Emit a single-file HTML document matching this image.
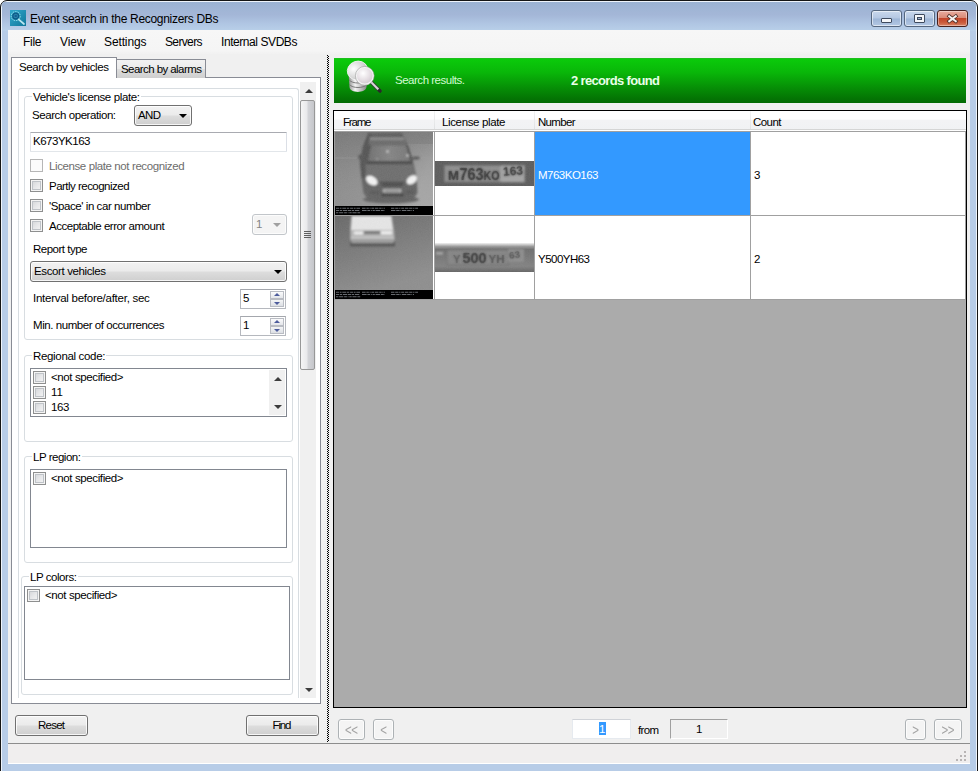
<!DOCTYPE html>
<html lang="en">
<head>
<meta charset="utf-8">
<title>Event search in the Recognizers DBs</title>
<style>
*{box-sizing:border-box;margin:0;padding:0}
html,body{width:978px;height:771px;overflow:hidden;background:#b9d1ea}
body{position:relative;font-family:"Liberation Sans",sans-serif;font-size:11.5px;color:#000}
.a{position:absolute}
.t{position:absolute;white-space:nowrap;line-height:14px;height:14px}
#frame{left:0;top:0;width:978px;height:771px;background:#fff;overflow:hidden}
#page{left:0;top:0;width:978px;height:771px;background:#fff}
#win{left:0;top:0;width:978px;height:790px;background:#b7cce7;border:1px solid #141414;border-radius:7px 7px 0 0;box-shadow:inset 0 0 0 1px #eef3fa;overflow:hidden}
#titlegrad{left:1px;top:1px;width:974px;height:29px;background:linear-gradient(#9bb2d2 0,#a4b7d8 45%,#b0c6e3 75%,#b9d0e9 100%)}
#client{left:8px;top:30px;width:962px;height:734px;background:#f0f0f0}
#menubar{left:8px;top:30px;width:962px;height:24px;background:linear-gradient(#f7f7f7,#f5f5f5 85%,#f1f1f1)}
.cb{border:1px solid #55677f;border-radius:3px;background:linear-gradient(#c9d8ec 0,#b4c7e2 48%,#9db5d6 52%,#b3c8e4 100%);box-shadow:inset 0 0 0 1px rgba(255,255,255,.55)}
.cb.x{background:linear-gradient(#e9ac9f 0,#d98a76 46%,#c3452a 50%,#c9593a 75%,#d98465 100%);border-color:#47201c;box-shadow:inset 0 0 0 1px rgba(255,255,255,.4)}
.gb{border:1px solid #d8dde1;border-radius:3px}
.gbl{background:#fff}
.chk{width:13px;height:13px;border:1px solid #8e8f8f;background:linear-gradient(135deg,#cfd1d4 0,#e6e7e9 50%,#f7f7f7 100%);box-shadow:inset 0 0 0 1px #f4f4f4, inset 0 0 0 2px #bfc3c8}
.chk.dis{border-color:#b6b6b6;box-shadow:none;background:#fbfbfb}
.btn{border:1px solid #707070;border-radius:3px;background:linear-gradient(#f2f2f2 0,#ebebeb 48%,#dddddd 52%,#cfcfcf 100%);box-shadow:inset 0 0 0 1px rgba(255,255,255,.8)}
.btn.dis{border-color:#adb2b5;background:#f4f4f4;box-shadow:inset 0 0 0 1px #fcfcfc}
.lb{border:1px solid #828790;background:#fff}
.edit{border:1px solid #e2e6ea;border-top-color:#a9abb1;border-left-color:#dfe1e7;border-right-color:#dbdfe6;background:#fff;border-radius:1px}
</style>
</head>
<body>
<div id="frame" class="a">
<div id="page" class="a"></div><div id="win" class="a"><div id="titlegrad" class="a"></div></div>
<svg class="a" style="left:10px;top:10px" width="16" height="16" viewBox="0 0 16 16">
<defs><linearGradient id="ig" x1="0" y1="0" x2="1" y2="1"><stop offset="0" stop-color="#31a9cc"/><stop offset="1" stop-color="#10779b"/></linearGradient></defs>
<rect width="16" height="16" fill="url(#ig)"/>
<circle cx="5.7" cy="6.1" r="4.5" fill="none" stroke="#9be6f2" stroke-width="1" stroke-dasharray="1.6 .9"/>
<circle cx="5.7" cy="6.1" r="2.9" fill="#2c86ad" stroke="#0e5a86" stroke-width="1.3"/>
<rect x="4.6" y="4.9" width="2.2" height="2.2" fill="#155f93"/>
<line x1="8.6" y1="9.3" x2="14" y2="14" stroke="#b9e6f0" stroke-width="1.7" stroke-linecap="round"/>
</svg>
<div class="t" style="left:30px;top:11.03px;font-size:12px;line-height:16px;height:16px;letter-spacing:-0.3px;">Event search in the Recognizers DBs</div>
<div class="a cb" style="left:871px;top:10px;width:31px;height:17px;"></div>
<div class="a " style="left:881px;top:18px;width:11px;height:5px;background:#f4f6f9;border:1px solid #3e4a5e;border-radius:1px"></div>
<div class="a cb" style="left:904px;top:10px;width:31px;height:17px;"></div>
<div class="a " style="left:914px;top:14px;width:11px;height:9px;background:#f4f6f9;border:1px solid #3e4a5e;border-radius:1px"></div>
<div class="a " style="left:917px;top:17px;width:5px;height:3px;background:#9fb4d2;border:1px solid #3e4a5e"></div>
<div class="a cb x" style="left:937px;top:10px;width:31px;height:17px;"></div>
<svg class="a" style="left:946px;top:13px" width="13" height="11" viewBox="0 0 13 11"><path d="M3.2 3.2 L9.8 8.3 M9.8 3.2 L3.2 8.3" stroke="#4a2a24" stroke-width="3.6" stroke-linecap="square"/><path d="M3.2 3.2 L9.8 8.3 M9.8 3.2 L3.2 8.3" stroke="#f6f1ef" stroke-width="2" stroke-linecap="square"/></svg>
<div id="client" class="a"></div><div id="menubar" class="a"></div>
<div class="t" style="left:23px;top:34.03px;font-size:12px;line-height:16px;height:16px;letter-spacing:-0.28px;">File</div>
<div class="t" style="left:60px;top:34.03px;font-size:12px;line-height:16px;height:16px;letter-spacing:-0.1px;">View</div>
<div class="t" style="left:104px;top:34.03px;font-size:12px;line-height:16px;height:16px;letter-spacing:-0.12px;">Settings</div>
<div class="t" style="left:165px;top:34.03px;font-size:12px;line-height:16px;height:16px;letter-spacing:-0.64px;">Servers</div>
<div class="t" style="left:221px;top:34.03px;font-size:12px;line-height:16px;height:16px;letter-spacing:-0.43px;">Internal SVDBs</div>
<div class="a " style="left:11px;top:77px;width:310px;height:627px;background:#fff;border:1px solid #898c95"></div>
<div class="a " style="left:116px;top:59px;width:90px;height:19px;border:1px solid #898c95;border-bottom:none;background:linear-gradient(#f2f2f2 0,#ebebeb 48%,#dddddd 52%,#cfcfcf 100%)"></div>
<div class="a " style="left:11px;top:57px;width:106px;height:21px;border:1px solid #898c95;border-bottom:none;background:#fff"></div>
<div class="t" style="left:19px;top:60.2px;letter-spacing:-0.38px;">Search by vehicles</div>
<div class="t" style="left:121px;top:62.2px;letter-spacing:-0.57px;">Search by alarms</div>
<div class="a gb" style="left:18px;top:88px;width:281px;height:610px;border-bottom:none;border-radius:3px 3px 0 0"></div>
<div class="a gb" style="left:24px;top:96px;width:269px;height:244px;"></div>
<div class="t" style="left:33px;top:90.2px;letter-spacing:-0.36px;background:#fff;padding:0 1px;margin-left:-1px">Vehicle's license plate:</div>
<div class="t" style="left:32px;top:108.2px;letter-spacing:-0.42px;">Search operation:</div>
<div class="a btn" style="left:134px;top:105px;width:58px;height:21px;"></div>
<div class="t" style="left:138px;top:108.2px;letter-spacing:-0.64px;">AND</div>
<div class="a" style="left:179px;top:114px;width:0;height:0;border-left:4px solid transparent;border-right:4px solid transparent;border-top:4px solid #000"></div>
<div class="a edit" style="left:30px;top:132px;width:257px;height:20px;"></div>
<div class="t" style="left:33px;top:134.2px;letter-spacing:-0.49px;">K673YK163</div>
<div class="a chk dis" style="left:30px;top:159px;width:13px;height:13px;"></div>
<div class="t" style="left:49px;top:159.2px;letter-spacing:-0.4px;color:#6d6d6d;">License plate not recognized</div>
<div class="a chk" style="left:30px;top:179px;width:13px;height:13px;"></div>
<div class="t" style="left:49px;top:179.2px;letter-spacing:-0.52px;">Partly recognized</div>
<div class="a chk" style="left:30px;top:199px;width:13px;height:13px;"></div>
<div class="t" style="left:49px;top:199.2px;letter-spacing:-0.43px;">'Space' in car number</div>
<div class="a chk" style="left:30px;top:219px;width:13px;height:13px;"></div>
<div class="t" style="left:49px;top:219.2px;letter-spacing:-0.47px;">Acceptable error amount</div>
<div class="a btn dis" style="left:252px;top:214px;width:35px;height:21px;border-color:#c2c6ca"></div>
<div class="t" style="left:256px;top:217.2px;color:#838383;">1</div>
<div class="a" style="left:273px;top:223px;width:0;height:0;border-left:4px solid transparent;border-right:4px solid transparent;border-top:4px solid #a0a0a0"></div>
<div class="t" style="left:33px;top:242.2px;letter-spacing:-0.5px;">Report type</div>
<div class="a btn" style="left:30px;top:261px;width:257px;height:21px;"></div>
<div class="t" style="left:34px;top:264.2px;letter-spacing:-0.38px;">Escort vehicles</div>
<div class="a" style="left:274px;top:270px;width:0;height:0;border-left:4px solid transparent;border-right:4px solid transparent;border-top:4px solid #000"></div>
<div class="t" style="left:33px;top:291.2px;letter-spacing:-0.26px;">Interval before/after, sec</div>
<div class="t" style="left:33px;top:318.2px;letter-spacing:-0.44px;">Min. number of occurrences</div>
<div class="a " style="left:240px;top:289px;width:46px;height:20px;background:#fff;border:1px solid #b5b8be;border-top-color:#a4a7ad"></div>
<div class="t" style="left:243px;top:291.2px;">5</div>
<div class="a" style="left:270px;top:291px;width:14px;height:8px;border:1px solid #b9bcc3;background:linear-gradient(#fbfbfc,#e4e6ea)"></div>
<div class="a" style="left:270px;top:299px;width:14px;height:8px;border:1px solid #b9bcc3;background:linear-gradient(#f4f5f6,#dcdfe4)"></div>
<div class="a" style="left:274px;top:293px;width:0;height:0;border-left:3px solid transparent;border-right:3px solid transparent;border-bottom:3px solid #4d5c9c"></div>
<div class="a" style="left:274px;top:302px;width:0;height:0;border-left:3px solid transparent;border-right:3px solid transparent;border-top:3px solid #4d5c9c"></div>
<div class="a " style="left:240px;top:316px;width:46px;height:20px;background:#fff;border:1px solid #b5b8be;border-top-color:#a4a7ad"></div>
<div class="t" style="left:243px;top:318.2px;">1</div>
<div class="a" style="left:270px;top:318px;width:14px;height:8px;border:1px solid #b9bcc3;background:linear-gradient(#fbfbfc,#e4e6ea)"></div>
<div class="a" style="left:270px;top:326px;width:14px;height:8px;border:1px solid #b9bcc3;background:linear-gradient(#f4f5f6,#dcdfe4)"></div>
<div class="a" style="left:274px;top:320px;width:0;height:0;border-left:3px solid transparent;border-right:3px solid transparent;border-bottom:3px solid #4d5c9c"></div>
<div class="a" style="left:274px;top:329px;width:0;height:0;border-left:3px solid transparent;border-right:3px solid transparent;border-top:3px solid #4d5c9c"></div>
<div class="a gb" style="left:24px;top:355px;width:269px;height:87px;"></div>
<div class="t" style="left:33px;top:349.2px;letter-spacing:-0.33px;background:#fff;padding:0 1px;margin-left:-1px">Regional code:</div>
<div class="a lb" style="left:30px;top:368px;width:257px;height:49px;"></div>
<div class="a chk" style="left:33px;top:371px;width:13px;height:13px;"></div>
<div class="t" style="left:51px;top:370.2px;letter-spacing:-0.39px;">&lt;not specified&gt;</div>
<div class="a chk" style="left:33px;top:386px;width:13px;height:13px;"></div>
<div class="t" style="left:51px;top:385.2px;letter-spacing:0.05px;">11</div>
<div class="a chk" style="left:33px;top:401px;width:13px;height:13px;"></div>
<div class="t" style="left:51px;top:400.2px;letter-spacing:-0.34px;">163</div>
<div class="a " style="left:269px;top:370px;width:16px;height:45px;background:#f0f0f0"></div>
<div class="a" style="left:273.5px;top:377px;width:0;height:0;border-left:4px solid transparent;border-right:4px solid transparent;border-bottom:4px solid #3c3c3c"></div>
<div class="a" style="left:273.5px;top:405px;width:0;height:0;border-left:4px solid transparent;border-right:4px solid transparent;border-top:4px solid #3c3c3c"></div>
<div class="a gb" style="left:24px;top:456px;width:269px;height:107px;"></div>
<div class="t" style="left:33px;top:450.2px;letter-spacing:-0.47px;background:#fff;padding:0 1px;margin-left:-1px">LP region:</div>
<div class="a lb" style="left:30px;top:469px;width:257px;height:79px;"></div>
<div class="a chk" style="left:33px;top:472px;width:13px;height:13px;"></div>
<div class="t" style="left:51px;top:471.2px;letter-spacing:-0.39px;">&lt;not specified&gt;</div>
<div class="a gb" style="left:21px;top:576px;width:272px;height:119px;"></div>
<div class="t" style="left:30px;top:570.2px;letter-spacing:-0.44px;background:#fff;padding:0 1px;margin-left:-1px">LP colors:</div>
<div class="a lb" style="left:24px;top:586px;width:266px;height:94px;"></div>
<div class="a chk" style="left:27px;top:589px;width:13px;height:13px;"></div>
<div class="t" style="left:45px;top:588.2px;letter-spacing:-0.39px;">&lt;not specified&gt;</div>
<div class="a " style="left:300px;top:82px;width:16px;height:616px;background:#f0f0f0"></div>
<div class="a" style="left:304.5px;top:89px;width:0;height:0;border-left:4px solid transparent;border-right:4px solid transparent;border-bottom:4px solid #3c3c3c"></div>
<div class="a" style="left:304.5px;top:688px;width:0;height:0;border-left:4px solid transparent;border-right:4px solid transparent;border-top:4px solid #3c3c3c"></div>
<div class="a " style="left:300px;top:100px;width:15px;height:270px;border:1px solid #979797;border-radius:2px;background:linear-gradient(90deg,#f5f5f5 0,#e9e9eb 45%,#d3d4d8 55%,#c5c6ca 100%)"></div>
<div class="a" style="left:304px;top:231px;width:7px;height:1px;background:#5f5f5f"></div>
<div class="a" style="left:304px;top:233px;width:7px;height:1px;background:#5f5f5f"></div>
<div class="a" style="left:304px;top:235px;width:7px;height:1px;background:#5f5f5f"></div>
<div class="a" style="left:304px;top:237px;width:7px;height:1px;background:#5f5f5f"></div>
<div class="a btn" style="left:15px;top:715px;width:73px;height:21px;"></div>
<div class="t" style="left:38px;top:718.2px;letter-spacing:-0.76px;">Reset</div>
<div class="a btn" style="left:246px;top:715px;width:73px;height:21px;"></div>
<div class="t" style="left:272.5px;top:718.2px;letter-spacing:-1.12px;">Find</div>
<div class="a" style="left:327px;top:55px;width:1px;height:687px;background-image:repeating-linear-gradient(#000 0 1px,#f0f0f0 1px 2px)"></div>
<div class="a" style="left:328px;top:56px;width:1px;height:686px;background-image:repeating-linear-gradient(#000 0 1px,#f0f0f0 1px 2px)"></div>
<div class="a " style="left:8px;top:743px;width:962px;height:1px;background:#8d8d8d"></div>
<div class="a " style="left:8px;top:744px;width:962px;height:20px;background:#f0eeee;border-bottom:1px solid #fff"></div>
<div class="a " style="left:334px;top:58px;width:632px;height:45px;background:linear-gradient(#0bcb0b 0,#09b709 30%,#068f06 65%,#036a03 100%);border-top:1px solid #1cbf1c"></div>
<svg class="a" style="left:340px;top:58px" width="48" height="45" viewBox="340 58 48 45">
<defs>
<linearGradient id="cy" x1="0" x2="1" y1="0" y2="0"><stop offset="0" stop-color="#8d8d8d"/><stop offset=".35" stop-color="#f4f4f4"/><stop offset=".7" stop-color="#b9b9b9"/><stop offset="1" stop-color="#7c7c7c"/></linearGradient>
<radialGradient id="tp" cx=".35" cy=".35" r=".8"><stop offset="0" stop-color="#ffffff"/><stop offset=".6" stop-color="#d6d6d6"/><stop offset="1" stop-color="#a9a9a9"/></radialGradient>
<radialGradient id="ln" cx=".4" cy=".35" r=".75"><stop offset="0" stop-color="#ffffff"/><stop offset=".55" stop-color="#e4dde2"/><stop offset="1" stop-color="#c9c2c8"/></radialGradient>
<linearGradient id="hd" x1="0" x2="1" y1="1" y2="0"><stop offset="0" stop-color="#5a5a5a"/><stop offset=".5" stop-color="#d8d8d8"/><stop offset="1" stop-color="#6a6a6a"/></linearGradient>
<filter id="b1"><feGaussianBlur stdDeviation=".45"/></filter>
</defs>
<g filter="url(#b1)">
<path d="M348.5 72 L349.5 87 C350 93.5 365.5 93.5 366.5 87 L367.5 72 Z" fill="url(#cy)"/>
<path d="M349.3 80 C352 84 364 84 366.8 80" stroke="#6f6f6f" stroke-width=".9" fill="none"/>
<path d="M349.6 84.5 C352 88.5 364 88.5 366.6 84.5" stroke="#6f6f6f" stroke-width=".9" fill="none"/>
<ellipse cx="357.5" cy="70.5" rx="10.3" ry="9.3" fill="url(#tp)" stroke="#f6f6f6" stroke-width=".8" transform="rotate(-20 357.5 70.5)"/>
<line x1="371" y1="82" x2="380" y2="91" stroke="#2a2a2a" stroke-width="3.6" stroke-linecap="round"/>
<line x1="371" y1="82" x2="378.3" y2="89.3" stroke="url(#hd)" stroke-width="2.4" stroke-linecap="butt"/>
<circle cx="364.8" cy="75.8" r="8.6" fill="url(#ln)" stroke="#f3f3f3" stroke-width="1.6"/>
<circle cx="364.8" cy="75.8" r="9.4" fill="none" stroke="#8f8f8f" stroke-width=".5"/>
</g>
</svg>
<div class="t" style="left:395px;top:73.2px;letter-spacing:-0.48px;color:#d2fbd2;">Search results.</div>
<div class="t" style="left:571px;top:72.7px;font-size:13px;line-height:16px;height:16px;letter-spacing:-0.66px;color:#e9ffe9;font-weight:bold;">2 records found</div>
<div class="a " style="left:333px;top:110px;width:634px;height:598px;background:#ababab;border:1px solid #000"></div>
<div class="a " style="left:334px;top:111px;width:632px;height:20px;background:linear-gradient(#ffffff 0,#ffffff 42%,#f3f3f5 50%,#f1f2f4 100%);border-bottom:1px solid #fff"></div>
<div class="a " style="left:334px;top:129px;width:632px;height:1px;background:#d5d5d5"></div>
<div class="a " style="left:434px;top:111px;width:1px;height:18px;background:linear-gradient(#f4f4f4,#e0e1e3)"></div>
<div class="a " style="left:534px;top:111px;width:1px;height:18px;background:linear-gradient(#f4f4f4,#e0e1e3)"></div>
<div class="a " style="left:750px;top:111px;width:1px;height:18px;background:linear-gradient(#f4f4f4,#e0e1e3)"></div>
<div class="t" style="left:343px;top:115.2px;letter-spacing:-1.18px;">Frame</div>
<div class="t" style="left:442px;top:115.2px;letter-spacing:-0.36px;">License plate</div>
<div class="t" style="left:538px;top:115.2px;letter-spacing:-0.68px;">Number</div>
<div class="t" style="left:753px;top:115.2px;letter-spacing:-0.55px;">Count</div>
<div class="a " style="left:334px;top:131px;width:632px;height:168px;background:#fff"></div>
<div class="a " style="left:334px;top:131px;width:632px;height:1px;background:#a0a0a0"></div>
<div class="a " style="left:334px;top:215px;width:632px;height:1px;background:#a0a0a0"></div>
<div class="a " style="left:334px;top:299px;width:632px;height:1px;background:#a0a0a0"></div>
<div class="a " style="left:334px;top:131px;width:1px;height:169px;background:#a0a0a0"></div>
<div class="a " style="left:434px;top:131px;width:1px;height:169px;background:#a0a0a0"></div>
<div class="a " style="left:534px;top:131px;width:1px;height:169px;background:#a0a0a0"></div>
<div class="a " style="left:750px;top:131px;width:1px;height:169px;background:#a0a0a0"></div>
<div class="a " style="left:965px;top:131px;width:1px;height:169px;background:#a0a0a0"></div>
<div class="a " style="left:535px;top:132px;width:215px;height:83px;background:#3399ff"></div>
<div class="t" style="left:538px;top:168.2px;letter-spacing:-0.51px;color:#fff;">M763KO163</div>
<div class="t" style="left:754px;top:168.2px;">3</div>
<div class="t" style="left:538px;top:252.2px;letter-spacing:-0.52px;">Y500YH63</div>
<div class="t" style="left:754px;top:252.2px;">2</div>
<svg class="a" style="left:335px;top:132px" width="98" height="83" viewBox="0 0 98 83">
<defs>
<linearGradient id="bg1" x1="0" x2="1" y1="0" y2="0.25"><stop offset="0" stop-color="#838383"/><stop offset=".55" stop-color="#8c8c8c"/><stop offset="1" stop-color="#a0a0a0"/></linearGradient>
<linearGradient id="bgd" x1="0" x2="0" y1="0" y2="1"><stop offset="0" stop-color="#6e6e6e" stop-opacity=".55"/><stop offset=".35" stop-color="#777" stop-opacity=".15"/><stop offset="1" stop-color="#fff" stop-opacity=".06"/></linearGradient>
<filter id="bl" x="-10%" y="-10%" width="120%" height="120%"><feGaussianBlur stdDeviation=".8"/></filter>
<filter id="bt"><feGaussianBlur stdDeviation=".8"/></filter>
<filter id="nz"><feTurbulence type="fractalNoise" baseFrequency=".9" numOctaves="2" seed="3"/><feColorMatrix values="0 0 0 0 .5  0 0 0 0 .5  0 0 0 0 .5  .25 .25 .25 0 -.2"/></filter>
<linearGradient id="ws" x1="0" x2="1" y1="0" y2="0"><stop offset="0" stop-color="#6f6f6f"/><stop offset=".5" stop-color="#848484"/><stop offset="1" stop-color="#767676"/></linearGradient>
</defs>
<rect width="98" height="74" fill="url(#bg1)"/>
<rect width="98" height="74" fill="url(#bgd)"/>
<rect x="60" y="0" width="38" height="12" fill="#757575" opacity=".45"/>
<rect y="25.5" width="98" height="1" fill="#9c9c9c" opacity=".5"/>
<g filter="url(#bl)">
<ellipse cx="56" cy="67.5" rx="28" ry="4" fill="#626262"/>
<path d="M33.5 0.5 L67 0.5 L72.5 12 L78 29 L81.5 45 L82.5 61 L79 66 L32 66 L28.5 61 L26.5 46 L25 30 L28 14 Z" fill="#626262"/>
<path d="M33.5 0.5 L28 14 L25 30 L26.5 46 L30.5 46 L30 30 L34 13 L36 2 Z" fill="#525252"/>
<path d="M35.5 2.5 L67 2.5 L68.5 5 L35 5 Z" fill="#585858"/>
<path d="M35 5.2 L68.5 5.2 L69.5 8 L34.5 8 Z" fill="#8a8a8a"/>
<path d="M34 8.3 L70 8.3 L71.5 13 L33.5 13 Z" fill="#6b6b6b"/>
<path d="M36 13.5 L71 13.5 L75.5 29.2 L32.5 29.2 Z" fill="url(#ws)"/>
<path d="M71 13.5 L72.8 13 L78 29.2 L75.5 29.2 Z" fill="#505050"/>
<path d="M36 13.5 L34.2 13 L30.5 29.2 L32.5 29.2 Z" fill="#4e4e4e"/>
<path d="M32 29.3 L76.5 29.3 L77.5 32 L31 32 Z" fill="#454545"/>
<path d="M31 32.3 L77.5 32.3 L80.5 45 L70 49.5 L44.5 49.5 L30.5 44 Z" fill="#6d6d6d"/>
<rect x="23.2" y="22.6" width="7.3" height="5" rx="2.2" fill="#575757"/>
<rect x="77.2" y="24.4" width="7.5" height="3.2" rx="1.6" fill="#565656"/>
<ellipse cx="36.8" cy="48.6" rx="6.4" ry="4.1" transform="rotate(33 36.8 48.6)" fill="#f4f4f4"/>
<ellipse cx="76.8" cy="47.8" rx="5.8" ry="3.9" transform="rotate(-36 76.8 47.8)" fill="#f4f4f4"/>
<path d="M45.2 49.8 L69.2 49.8 L67.2 54.6 L47.6 54.6 Z" fill="#4d4d4d"/>
<rect x="48" y="57" width="18.2" height="3.6" fill="#b8b8b8"/>
<rect x="49.5" y="58" width="15" height="1.6" fill="#8a8a8a"/>
<rect x="46.3" y="61.2" width="22.4" height="3.2" fill="#474747"/>
<rect x="35" y="59.5" width="9" height="2.2" fill="#555"/><rect x="71" y="59" width="8" height="2.2" fill="#555"/>
<circle cx="52.5" cy="19.5" r="1" fill="#f4f4f4"/><circle cx="72.5" cy="23.5" r="1.1" fill="#ececec"/><circle cx="42" cy="27" r=".7" fill="#ccc"/>
</g>
<rect width="98" height="74" filter="url(#nz)" opacity=".35"/>
<rect y="74" width="98" height="9" fill="#000"/>
<g stroke="#aab0b8" stroke-width="1.1" fill="none" opacity=".6"><path d="M1 76.3H25" stroke-dasharray="3.2 .7 1.6 .8 4 .7 2.2 .9"/><path d="M27 76.3H50" stroke-dasharray="3.6 .8 2.4 .8 1 .8 2.6 .8"/><path d="M56 76.3H83" stroke-dasharray="3.4 .8 3.2 .8 1.2 .8 3 .8"/><path d="M1 78.5H25" stroke-dasharray="3.2 .7 2.2 .8 4.4 .7"/><path d="M27 78.5H50" stroke-dasharray="4.6 .8 2.8 .8 .8 .8 2.2 .8"/><path d="M56 78.5H79" stroke-dasharray="4.4 .8 3.4 .8 .8 .8"/><path d="M1 80.7H26" stroke-dasharray="2.4 .7 4.2 .8 2.8 .8 .8 .8"/></g></svg>
<svg class="a" style="left:335px;top:216px" width="98" height="83" viewBox="0 0 98 83">
<defs>
<linearGradient id="bg2" x1="0" x2="0.4" y1="0" y2="1"><stop offset="0" stop-color="#686868"/><stop offset=".5" stop-color="#7b7b7b"/><stop offset="1" stop-color="#8e8e8e"/></linearGradient>
</defs>
<rect width="98" height="74" fill="url(#bg2)"/>
<g filter="url(#bl)">
<rect x="15" y="24" width="45" height="6.5" fill="#565656"/>
<path d="M16 0 L57 0 L59 14 L60 24 L58 27 L17 27 L15 24 L15 14 Z" fill="#9d9d9d"/>
<path d="M17 0 L56 0 L58 14 L16 14 Z" fill="#e6e6e6"/>
<rect x="16" y="14.5" width="43" height="5" fill="#b8b8b8"/>
<rect x="19" y="15.5" width="9" height="3" fill="#efefef"/><rect x="46" y="15" width="11" height="3.5" fill="#efefef"/>
<rect x="29" y="15.5" width="16" height="2.5" fill="#6a6a6a"/>
<rect x="16" y="20" width="43" height="3" fill="#c2c2c2"/>
</g>
<rect width="98" height="74" filter="url(#nz)" opacity=".3"/>
<rect y="74" width="98" height="9" fill="#000"/>
<g stroke="#aab0b8" stroke-width="1.1" fill="none" opacity=".6"><path d="M1 76.3H25" stroke-dasharray="3.2 .7 1.6 .8 4 .7 2.2 .9"/><path d="M27 76.3H50" stroke-dasharray="3.6 .8 2.4 .8 1 .8 2.6 .8"/><path d="M56 76.3H83" stroke-dasharray="3.4 .8 3.2 .8 1.2 .8 3 .8"/><path d="M1 78.5H25" stroke-dasharray="3.2 .7 2.2 .8 4.4 .7"/><path d="M27 78.5H50" stroke-dasharray="4.6 .8 2.8 .8 .8 .8 2.2 .8"/><path d="M56 78.5H79" stroke-dasharray="4.4 .8 3.4 .8 .8 .8"/><path d="M1 80.7H26" stroke-dasharray="2.4 .7 4.2 .8 2.8 .8 .8 .8"/></g></svg>
<svg class="a" style="left:435px;top:161px" width="99" height="25" viewBox="0 0 99 25">
<defs><filter id="bs"><feGaussianBlur stdDeviation=".8" result="b"/><feComponentTransfer in="SourceGraphic" result="s"><feFuncA type="linear" slope=".5"/></feComponentTransfer><feMerge><feMergeNode in="b"/><feMergeNode in="s"/></feMerge></filter></defs>
<rect width="99" height="25" fill="#5c5c5c"/>
<g filter="url(#bt)">
<rect x="9.5" y="4.5" width="80" height="16.5" fill="#8d8d8d" stroke="#747474" stroke-width="1"/>
<rect x="65.5" y="4.5" width="24" height="16.5" fill="#a3a3a3"/>
</g>
<g filter="url(#bs)" font-family="Liberation Sans, sans-serif" font-weight="bold" fill="#333">
<text x="13" y="19" font-size="12" textLength="11" lengthAdjust="spacingAndGlyphs">M</text>
<text x="24.5" y="19" font-size="16" textLength="24" lengthAdjust="spacingAndGlyphs">763</text>
<text x="48.5" y="19" font-size="12" textLength="16" lengthAdjust="spacingAndGlyphs">KO</text>
<text x="68" y="14" font-size="12" textLength="20" lengthAdjust="spacingAndGlyphs" transform="rotate(-4 78 10)">163</text>
</g>
<rect width="99" height="25" filter="url(#nz)" opacity=".3"/>
</svg>
<svg class="a" style="left:435px;top:243px" width="99" height="29" viewBox="0 0 99 29">
<defs><linearGradient id="p2" x1="0" x2="0" y1="0" y2="1"><stop offset="0" stop-color="#f4f4f4"/><stop offset=".12" stop-color="#9a9a9a"/><stop offset=".22" stop-color="#6f6f6f"/><stop offset=".8" stop-color="#828282"/><stop offset="1" stop-color="#666"/></linearGradient></defs>
<rect width="99" height="29" fill="url(#p2)"/>
<g filter="url(#bt)">
<rect x="12" y="7" width="61" height="15" fill="#868686" stroke="#6a6a6a" stroke-width=".8"/>
<rect x="73" y="6" width="16" height="13" fill="#8e8e8e"/>
<rect x="1" y="9" width="7" height="2.5" fill="#a8a8a8"/>
</g>
<g filter="url(#bs)" font-family="Liberation Sans, sans-serif" font-weight="bold" fill="#3a3a3a">
<text x="18" y="20" font-size="11" textLength="7.5" lengthAdjust="spacingAndGlyphs" fill="#5c5c5c">Y</text>
<text x="27.5" y="20" font-size="15.5" textLength="24" lengthAdjust="spacingAndGlyphs">500</text>
<text x="53.5" y="20" font-size="10" textLength="16" lengthAdjust="spacingAndGlyphs" fill="#555">YH</text>
<text x="74" y="15" font-size="9" textLength="11" lengthAdjust="spacingAndGlyphs" transform="rotate(-8 79 12)" fill="#555">63</text>
</g>
<rect width="99" height="29" filter="url(#nz)" opacity=".25"/>
</svg>
<div class="a btn dis" style="left:338px;top:719px;width:27px;height:21px;border-radius:3px"></div>
<div class="t" style="left:338px;top:723.2px;color:#a3a3a3;width:27px;text-align:center;letter-spacing:-0.6px;text-indent:-0.6px;transform:scaleY(1.25);">&lt;&lt;</div>
<div class="a btn dis" style="left:373px;top:719px;width:21px;height:21px;border-radius:3px"></div>
<div class="t" style="left:373px;top:723.2px;color:#a3a3a3;width:21px;text-align:center;letter-spacing:-0.6px;text-indent:-0.6px;transform:scaleY(1.25);">&lt;</div>
<div class="a btn dis" style="left:905px;top:719px;width:21px;height:21px;border-radius:3px"></div>
<div class="t" style="left:905px;top:723.2px;color:#a3a3a3;width:21px;text-align:center;letter-spacing:-0.6px;text-indent:-0.6px;transform:scaleY(1.25);">&gt;</div>
<div class="a btn dis" style="left:934px;top:719px;width:28px;height:21px;border-radius:3px"></div>
<div class="t" style="left:934px;top:723.2px;color:#a3a3a3;width:28px;text-align:center;letter-spacing:-0.6px;text-indent:-0.6px;transform:scaleY(1.25);">&gt;&gt;</div>
<div class="a " style="left:572px;top:719px;width:59px;height:20px;background:#fff;border:1px solid #e6eaef;border-top-color:#d0d3d8"></div>
<div class="a " style="left:599px;top:722px;width:7px;height:13px;background:#3399ff"></div>
<div class="t" style="left:599px;top:722.2px;color:#fff;">1</div>
<div class="t" style="left:638px;top:723.2px;letter-spacing:-0.67px;">from</div>
<div class="a " style="left:670px;top:719px;width:58px;height:20px;background:#f0f0f0;border-top:1px solid #a0a0a0;border-left:1px solid #a0a0a0;border-bottom:1px solid #fff;border-right:1px solid #fff"></div>
<div class="t" style="left:696px;top:722.2px;">1</div>
<div class="a " style="left:964px;top:759px;width:2px;height:2px;background:#b8b4b4"></div>
<div class="a " style="left:960px;top:759px;width:2px;height:2px;background:#b8b4b4"></div>
<div class="a " style="left:956px;top:759px;width:2px;height:2px;background:#b8b4b4"></div>
<div class="a " style="left:964px;top:755px;width:2px;height:2px;background:#b8b4b4"></div>
<div class="a " style="left:960px;top:755px;width:2px;height:2px;background:#b8b4b4"></div>
<div class="a " style="left:964px;top:751px;width:2px;height:2px;background:#b8b4b4"></div>
</div>
</body>
</html>
